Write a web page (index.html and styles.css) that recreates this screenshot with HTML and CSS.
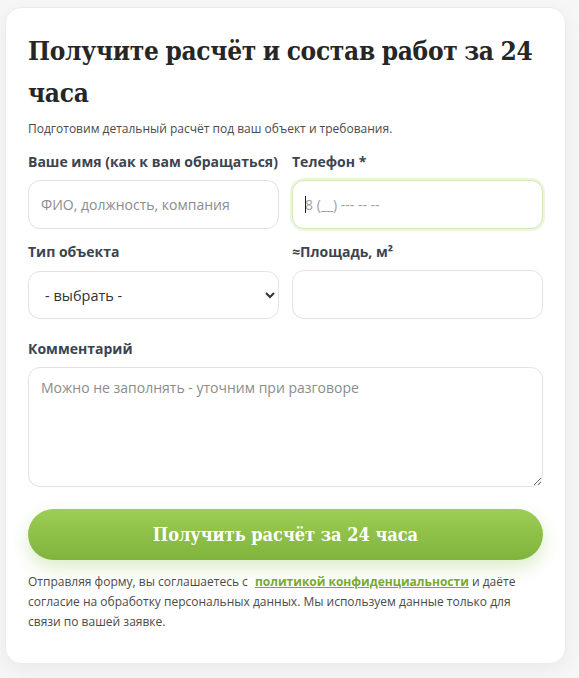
FILE: index.html
```html
<!DOCTYPE html>
<html lang="ru">
<head>
<meta charset="utf-8">
<title>Получите расчёт</title>
<link rel="stylesheet" href="styles.css">
</head>
<body>
<form class="card">
  <h1 class="title">Получите расчёт и состав работ за 24 часа</h1>
  <p class="lead">Подготовим детальный расчёт под ваш объект и требования.</p>
  <div class="grid">
    <div class="field">
      <label class="label">Ваше имя (как к вам обращаться)</label>
      <input class="control" type="text" placeholder="ФИО, должность, компания">
    </div>
    <div class="field">
      <label class="label">Телефон *</label>
      <span class="caret-wrap"><input class="control control-focus" type="text" placeholder="8 (__) --- -- --"></span>
    </div>
    <div class="field">
      <label class="label">Тип объекта</label>
      <select class="control select">
        <option>- выбрать -</option>
      </select>
    </div>
    <div class="field">
      <label class="label">≈Площадь, м²</label>
      <input class="control" type="text">
    </div>
  </div>
  <div class="field field-comment">
    <label class="label">Комментарий</label>
    <textarea class="control textarea" placeholder="Можно не заполнять - уточним при разговоре"></textarea>
  </div>
  <button class="submit" type="button">Получить расчёт за 24 часа</button>
  <p class="note">Отправляя форму, вы соглашаетесь с <a class="link" href="#">политикой конфиденциальности</a> и даёте согласие на обработку персональных данных. Мы используем данные только для связи по вашей заявке.</p>
</form>
</body>
</html>
```
FILE: styles.css
```css
html, body {
  margin: 0;
  padding: 0;
}
body {
  background: #f6f6f6;
  font-family: "Open Sans", "Noto Sans", sans-serif;
  color: #333;
}
.card {
  display: block;
  width: 515px;
  margin: 7px 0 16px 5px;
  padding: 22px 22px 31px 22px;
  background: #fff;
  border: 1px solid #ececec;
  border-radius: 16px;
  box-shadow: 0 6px 18px rgba(0, 0, 0, 0.05);
}
.title {
  margin: 0;
  font-family: "DejaVu Serif", serif;
  font-stretch: condensed;
  font-weight: 700;
  font-size: 26px;
  letter-spacing: -0.3px;
  word-spacing: -1px;
  line-height: 42px;
  color: #262626;
}
.lead {
  margin: 6px 0 0;
  font-size: 12px;
  line-height: 18px;
  color: #4a4a4a;
}
.grid {
  display: grid;
  grid-template-columns: 1fr 1fr;
  column-gap: 13px;
  row-gap: 14px;
  margin-top: 15px;
}
.field {
  display: flex;
  flex-direction: column;
}
.label {
  font-size: 14px;
  font-weight: 700;
  line-height: 18px;
  color: #3b4450;
  margin-bottom: 9px;
  white-space: nowrap;
}
.control {
  box-sizing: border-box;
  width: 100%;
  height: 49px;
  padding: 0 12px;
  border: 1px solid #e2e2e2;
  border-radius: 12px;
  background: #fff;
  font-family: "Open Sans", "Noto Sans", sans-serif;
  font-size: 14px;
  color: #333;
  outline: none;
}
.control::placeholder {
  color: #8c8c8c;
}
.caret-wrap {
  position: relative;
  display: block;
}
.caret-wrap::before {
  content: "";
  position: absolute;
  left: 13px;
  top: 16px;
  width: 1px;
  height: 17px;
  background: #222;
}
.control-focus {
  border-color: #d3e8b4;
  box-shadow: 0 0 0 2px rgba(150, 200, 90, 0.18);
}
.control-focus::placeholder {
  color: #a0a0a0;
}
.select {
  height: 48px;
  margin-top: 1px;
  padding-left: 12px;
  font-size: 14.5px;
  color: #333;
}
.field-comment {
  margin-top: 21px;
}
.textarea {
  height: 120px;
  padding: 10px 12px;
  resize: vertical;
  line-height: 20px;
}
.submit {
  display: block;
  width: 100%;
  height: 51px;
  margin-top: 22px;
  border: 0;
  border-radius: 26px;
  background: linear-gradient(#9dcd55, #7fb43c);
  box-shadow: 0 8px 18px rgba(130, 185, 60, 0.28);
  font-family: "DejaVu Serif", serif;
  font-stretch: condensed;
  font-weight: 700;
  font-size: 18px;
  color: #fff;
  cursor: pointer;
}
.note {
  margin: 12px 0 0;
  font-size: 12px;
  line-height: 20px;
  color: #4a4a4a;
}
.link {
  margin-left: 4px;
  color: #78a932;
  font-weight: 700;
  text-decoration: underline;
}
```
